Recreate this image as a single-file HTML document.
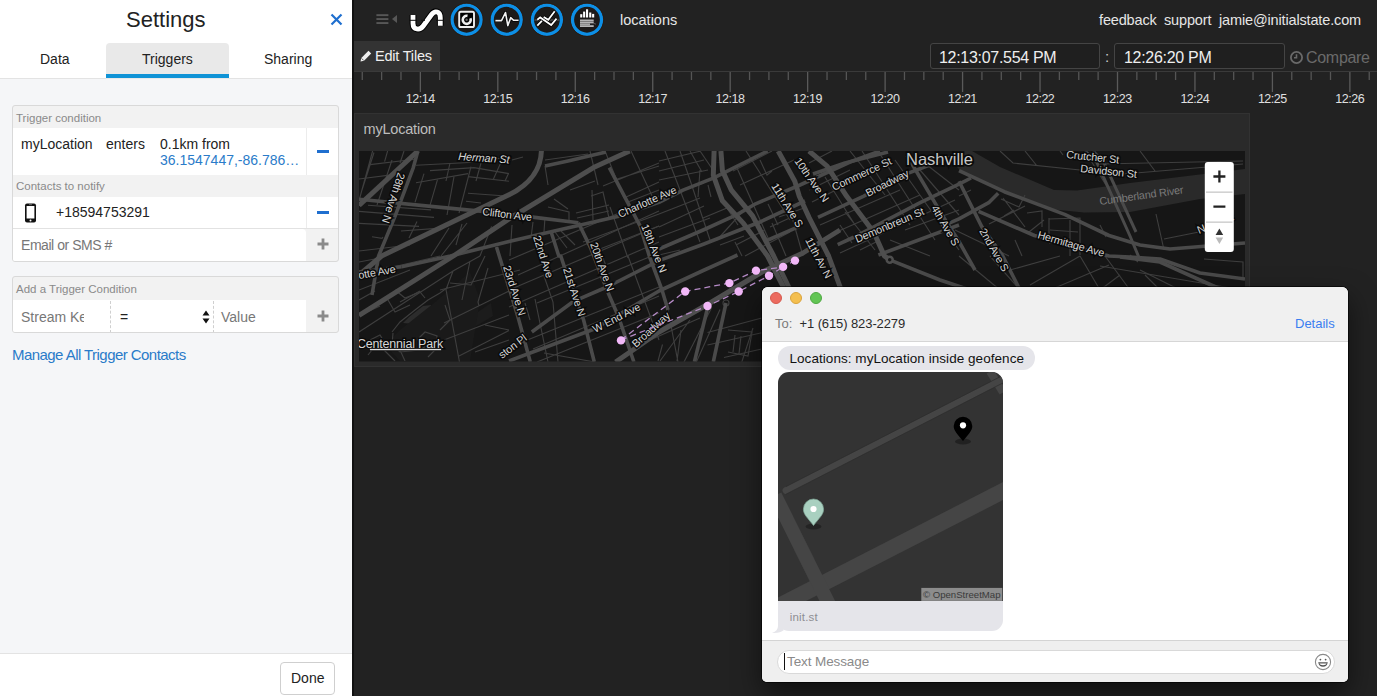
<!DOCTYPE html>
<html><head><meta charset="utf-8">
<style>
*{margin:0;padding:0;box-sizing:border-box}
html,body{width:1377px;height:696px;overflow:hidden;background:#222;font-family:"Liberation Sans",sans-serif}
.a{position:absolute;white-space:nowrap}
#left{position:absolute;left:0;top:0;width:352px;height:696px;background:#f5f6f8}
#lhead{position:absolute;left:0;top:0;width:352px;height:79px;background:#fff;border-bottom:1px solid #e3e3e3}
#lfoot{position:absolute;left:0;top:653px;width:352px;height:43px;background:#fff;border-top:1px solid #e3e3e3}
.box{position:absolute;left:12px;width:327px;border:1px solid #d9d9d9;border-radius:3px;background:#f2f2f2;overflow:hidden}
.hd{position:absolute;left:3px;font-size:11.5px;color:#8a8a8a}
.row{position:absolute;left:0;background:#fff}
.t14{font-size:14px;color:#222}
.tl{top:92px;width:50px;text-align:center;font-size:12.5px;color:#e0e0e0;letter-spacing:-0.5px}
#dark{position:absolute;left:352px;top:0;width:2px;height:696px;background:#111}
</style></head><body>
<div id="left">
  <div id="lhead">
    <div class="a" style="left:126px;top:6.5px;font-size:22px;color:#222">Settings</div>
    <svg class="a" style="left:330px;top:13px" width="13" height="13" viewBox="0 0 13 13"><path d="M1.5 1.5L11.5 11.5M11.5 1.5L1.5 11.5" stroke="#1f6fcf" stroke-width="2.2"/></svg>
    <div class="a" style="left:106px;top:43px;width:123px;height:36px;background:#e9e9e9;border-radius:4px 4px 0 0"></div>
    <div class="a" style="left:106px;top:74px;width:123px;height:4px;background:#0f93d6"></div>
    <div class="a t14" style="left:40px;top:51px">Data</div>
    <div class="a t14" style="left:142px;top:51px">Triggers</div>
    <div class="a t14" style="left:264px;top:51px">Sharing</div>
  </div>
  <div class="box" style="top:105px;height:157px">
    <div class="hd" style="top:6px">Trigger condition</div>
    <div class="row" style="top:22px;width:325px;height:47px"></div>
    <div class="a t14" style="left:8px;top:30px">myLocation</div>
    <div class="a t14" style="left:93px;top:30px">enters</div>
    <div class="a t14" style="left:147px;top:30px">0.1km from</div>
    <div class="a t14" style="left:147px;top:46px;color:#2a7bc9">36.1547447,-86.786…</div>
    <div class="a" style="left:293px;top:22px;width:1px;height:47px;background:#ececec"></div>
    <div class="a" style="left:304px;top:44px;width:12px;height:2.5px;background:#1f6fcf"></div>
    <div class="hd" style="top:74px">Contacts to notify</div>
    <div class="row" style="top:91px;width:325px;height:31px"></div>
    <div class="a" style="left:293px;top:91px;width:1px;height:31px;background:#ececec"></div>
    <div class="a t14" style="left:43px;top:98px">+18594753291</div>
    <div class="a" style="left:304px;top:105px;width:12px;height:2.5px;background:#1f6fcf"></div>
    <div class="a" style="left:0;top:121.5px;width:325px;height:1.5px;background:#e2e2e2"></div>
    <div class="row" style="top:123px;width:293px;height:33px;border-radius:0 4px 0 0"></div>
    <div class="a t14" style="left:8px;top:131px;color:#777;letter-spacing:-0.45px">Email or SMS #</div>
    <svg class="a" style="left:11px;top:97px" width="13" height="20" viewBox="0 0 13 20"><rect x="1" y="0.5" width="11" height="19" rx="2" fill="#111"/><rect x="2.6" y="3" width="7.8" height="12.5" fill="#fff"/><circle cx="6.5" cy="17.5" r="1" fill="#fff"/><rect x="5" y="1.3" width="3" height="0.8" fill="#777"/></svg>
    <svg class="a" style="left:304px;top:132px" width="12" height="12" viewBox="0 0 12 12"><path d="M6 0.5V11.5M0.5 6H11.5" stroke="#8a8a8a" stroke-width="2.8"/></svg>
  </div>
  <div class="box" style="top:276px;height:57px">
    <div class="hd" style="top:6px">Add a Trigger Condition</div>
    <div class="row" style="top:23px;width:293px;height:33px"></div>
    <div class="a" style="left:0;top:23px;width:71px;height:30px;overflow:hidden"><div class="a t14" style="left:8px;top:9px;color:#777">Stream Keys</div></div>
    <div class="a t14" style="left:107px;top:32px">=</div>
    <div class="a" style="left:97px;top:24px;width:0;height:32px;border-left:1px dashed #cfcfcf"></div>
    <div class="a" style="left:200px;top:24px;width:0;height:32px;border-left:1px dashed #cfcfcf"></div>
    <svg class="a" style="left:189px;top:33px" width="8" height="14" viewBox="0 0 8 14"><path d="M4 0.5L7.5 5.5H0.5Z M4 13.5L7.5 8.5H0.5Z" fill="#111"/></svg>
    <div class="a t14" style="left:208px;top:32px;color:#777">Value</div>
    <svg class="a" style="left:304px;top:33px" width="12" height="12" viewBox="0 0 12 12"><path d="M6 0.5V11.5M0.5 6H11.5" stroke="#8a8a8a" stroke-width="2.8"/></svg>
  </div>
  <div class="a" style="left:12px;top:346px;font-size:15px;letter-spacing:-0.55px;color:#2a7bc9">Manage All Trigger Contacts</div>
  <div id="lfoot">
    <div class="a" style="left:280px;top:8px;width:55px;height:33px;border:1px solid #cfcfcf;border-radius:4px;background:#fff"></div>
    <div class="a t14" style="left:291px;top:16px">Done</div>
  </div>
</div>

<div class="a" style="left:354px;top:0;width:1023px;height:696px;background:#222"></div>
<!-- top bar -->
<svg class="a" style="left:370px;top:0" width="250" height="40" viewBox="370 0 250 40">
  <rect x="376.4" y="14.2" width="12" height="1.9" fill="#575757"/>
  <rect x="376.4" y="18.1" width="12" height="1.9" fill="#575757"/>
  <rect x="376.4" y="22.1" width="12" height="1.9" fill="#575757"/>
  <path d="M392 19L397 15V23Z" fill="#575757"/>
  <path d="M413 15V23.5C413 30.2 420 30.5 423.2 26L431.6 14.5C435 10 440.3 11.3 440.3 17.8V25.8" fill="none" stroke="#000" stroke-width="6.8"/>
  <path d="M413 15V23.5C413 30.2 420 30.5 423.2 26L431.6 14.5C435 10 440.3 11.3 440.3 17.8V25.8" fill="none" stroke="#fff" stroke-width="4.8"/>
  <rect x="409" y="19.8" width="8" height="1" fill="#111"/><rect x="421" y="19.8" width="4" height="1" fill="#111"/><rect x="436" y="19.8" width="8" height="1" fill="#111"/>
  <g fill="#1c1a19" stroke="#0d8fe6" stroke-width="3.4">
    <circle cx="466.6" cy="19.75" r="14.6"/>
    <circle cx="506.7" cy="19.75" r="14.6"/>
    <circle cx="546.9" cy="19.75" r="14.6"/>
    <circle cx="587" cy="19.75" r="14.6"/>
  </g>
  <g fill="none" stroke="#2a180c" stroke-width="0.8">
    <circle cx="466.6" cy="19.75" r="16.6"/><circle cx="506.7" cy="19.75" r="16.6"/><circle cx="546.9" cy="19.75" r="16.6"/><circle cx="587" cy="19.75" r="16.6"/>
  </g>
  <rect x="459.2" y="11.8" width="14.8" height="15.2" rx="1.6" fill="#000" stroke="#eee" stroke-width="1.9"/>
  <path d="M470.4 18.2A4 4 0 1 1 467.5 15.9" fill="none" stroke="#eee" stroke-width="2.6"/>
  <circle cx="466.6" cy="19.8" r="1.2" fill="#666"/>
  <path d="M495.4 20.6H501.5L505.5 12.5L507.8 25.6L510.7 17.7L513.7 20.3H518.6" fill="none" stroke="#000" stroke-width="3" stroke-linejoin="round"/>
  <path d="M495.4 20.6H501.5L505.5 12.5L507.8 25.6L510.7 17.7L513.7 20.3H518.6" fill="none" stroke="#f2f2f2" stroke-width="1.6" stroke-linejoin="round"/>
  <rect x="534.4" y="19.6" width="25" height="0.8" fill="#777"/>
  <g fill="none" stroke="#000" stroke-width="3.2">
    <path d="M537.3 25.6L541.9 20.9"/><path d="M537.3 19.8L540.2 17.4L551.2 25L556.5 18.6"/><path d="M543.7 16.9L548.3 19.8L554.7 11.3"/>
  </g>
  <g fill="none" stroke="#fff" stroke-width="1.8">
    <path d="M537.3 25.6L541.9 20.9"/><path d="M537.3 19.8L540.2 17.4L551.2 25L556.5 18.6"/><path d="M543.7 16.9L548.3 19.8L554.7 11.3"/>
  </g>
  <g fill="#fff">
    <rect x="580.2" y="14.2" width="2.1" height="3.3"/><rect x="583.1" y="11.6" width="2.1" height="5.9"/><rect x="586" y="9.3" width="2.1" height="8.2"/><rect x="589.2" y="12.5" width="2.1" height="5"/><rect x="592.1" y="13.9" width="2.1" height="3.6"/>
  </g>
  <g fill="#b5b5b5">
    <rect x="580" y="19.5" width="13.7" height="1.6"/><rect x="580" y="21.4" width="13.7" height="1.6"/><rect x="580" y="23.3" width="15.4" height="1.6"/><rect x="580" y="25.2" width="13.7" height="1.8"/>
  </g>
  <rect x="590" y="23.6" width="5.4" height="1.2" fill="#000"/>
</svg>
<div class="a" style="left:620px;top:12px;font-size:14.5px;color:#e6e6e6;letter-spacing:0px">locations</div>
<div class="a" style="left:1099px;top:12px;font-size:14.5px;color:#e6e6e6;letter-spacing:-0.15px">feedback</div>
<div class="a" style="left:1164px;top:12px;font-size:14.5px;color:#e6e6e6;letter-spacing:-0.15px">support</div>
<div class="a" style="left:1219px;top:12px;font-size:14.5px;color:#e6e6e6;letter-spacing:-0.15px">jamie@initialstate.com</div>
<!-- edit tiles -->
<div class="a" style="left:354px;top:41px;width:86px;height:30px;background:#333"></div>
<svg class="a" style="left:359px;top:49px" width="14" height="14" viewBox="0 0 14 14"><path d="M1.5 12.5L2.3 9L9.5 1.8L12.2 4.5L5 11.7Z" fill="#eee"/><path d="M2.6 9.4L4.6 11.4" stroke="#333" stroke-width="0.8"/></svg>
<div class="a" style="left:375px;top:48px;font-size:14.5px;color:#f0f0f0;letter-spacing:-0.2px">Edit Tiles</div>
<!-- time inputs -->
<div class="a" style="left:930px;top:43px;width:170px;height:26px;border:1px solid #444;border-radius:3px;background:#1f1f1f"></div>
<div class="a" style="left:939px;top:48.5px;font-size:16px;color:#eee;letter-spacing:-0.3px">12:13:07.554 PM</div>
<div class="a" style="left:1105px;top:48px;font-size:15px;color:#ccc">:</div>
<div class="a" style="left:1114px;top:43px;width:171px;height:26px;border:1px solid #444;border-radius:3px;background:#1f1f1f"></div>
<div class="a" style="left:1124px;top:48.5px;font-size:16px;color:#eee;letter-spacing:-0.3px">12:26:20 PM</div>
<svg class="a" style="left:1289px;top:50px" width="15" height="15" viewBox="0 0 15 15"><circle cx="7.5" cy="7.5" r="5.6" fill="none" stroke="#6a6a6a" stroke-width="1.8"/><path d="M7.5 4.3V7.8H5" fill="none" stroke="#6a6a6a" stroke-width="1.6"/></svg>
<div class="a" style="left:1306px;top:48.5px;font-size:16px;color:#6a6a6a;letter-spacing:-0.3px">Compare</div>
<!-- timeline -->
<svg class="a" style="left:0;top:0" width="1377" height="100" viewBox="0 0 1377 100"><rect x="354" y="71" width="1023" height="1" fill="#3a3a3a"/><rect x="361.61" y="72" width="1.3" height="8" fill="#555"/><rect x="380.97" y="72" width="1.3" height="8" fill="#555"/><rect x="400.33" y="72" width="1.3" height="8" fill="#555"/><rect x="419.70" y="72" width="1.3" height="20" fill="#5a5a5a"/><rect x="439.06" y="72" width="1.3" height="8" fill="#555"/><rect x="458.43" y="72" width="1.3" height="8" fill="#555"/><rect x="477.79" y="72" width="1.3" height="8" fill="#555"/><rect x="497.16" y="72" width="1.3" height="20" fill="#5a5a5a"/><rect x="516.52" y="72" width="1.3" height="8" fill="#555"/><rect x="535.89" y="72" width="1.3" height="8" fill="#555"/><rect x="555.25" y="72" width="1.3" height="8" fill="#555"/><rect x="574.62" y="72" width="1.3" height="20" fill="#5a5a5a"/><rect x="593.99" y="72" width="1.3" height="8" fill="#555"/><rect x="613.35" y="72" width="1.3" height="8" fill="#555"/><rect x="632.71" y="72" width="1.3" height="8" fill="#555"/><rect x="652.08" y="72" width="1.3" height="20" fill="#5a5a5a"/><rect x="671.44" y="72" width="1.3" height="8" fill="#555"/><rect x="690.81" y="72" width="1.3" height="8" fill="#555"/><rect x="710.17" y="72" width="1.3" height="8" fill="#555"/><rect x="729.54" y="72" width="1.3" height="20" fill="#5a5a5a"/><rect x="748.90" y="72" width="1.3" height="8" fill="#555"/><rect x="768.27" y="72" width="1.3" height="8" fill="#555"/><rect x="787.63" y="72" width="1.3" height="8" fill="#555"/><rect x="807.00" y="72" width="1.3" height="20" fill="#5a5a5a"/><rect x="826.37" y="72" width="1.3" height="8" fill="#555"/><rect x="845.73" y="72" width="1.3" height="8" fill="#555"/><rect x="865.10" y="72" width="1.3" height="8" fill="#555"/><rect x="884.46" y="72" width="1.3" height="20" fill="#5a5a5a"/><rect x="903.82" y="72" width="1.3" height="8" fill="#555"/><rect x="923.19" y="72" width="1.3" height="8" fill="#555"/><rect x="942.55" y="72" width="1.3" height="8" fill="#555"/><rect x="961.92" y="72" width="1.3" height="20" fill="#5a5a5a"/><rect x="981.28" y="72" width="1.3" height="8" fill="#555"/><rect x="1000.65" y="72" width="1.3" height="8" fill="#555"/><rect x="1020.01" y="72" width="1.3" height="8" fill="#555"/><rect x="1039.38" y="72" width="1.3" height="20" fill="#5a5a5a"/><rect x="1058.74" y="72" width="1.3" height="8" fill="#555"/><rect x="1078.11" y="72" width="1.3" height="8" fill="#555"/><rect x="1097.47" y="72" width="1.3" height="8" fill="#555"/><rect x="1116.84" y="72" width="1.3" height="20" fill="#5a5a5a"/><rect x="1136.20" y="72" width="1.3" height="8" fill="#555"/><rect x="1155.57" y="72" width="1.3" height="8" fill="#555"/><rect x="1174.93" y="72" width="1.3" height="8" fill="#555"/><rect x="1194.30" y="72" width="1.3" height="20" fill="#5a5a5a"/><rect x="1213.66" y="72" width="1.3" height="8" fill="#555"/><rect x="1233.03" y="72" width="1.3" height="8" fill="#555"/><rect x="1252.39" y="72" width="1.3" height="8" fill="#555"/><rect x="1271.76" y="72" width="1.3" height="20" fill="#5a5a5a"/><rect x="1291.12" y="72" width="1.3" height="8" fill="#555"/><rect x="1310.49" y="72" width="1.3" height="8" fill="#555"/><rect x="1329.86" y="72" width="1.3" height="8" fill="#555"/><rect x="1349.22" y="72" width="1.3" height="20" fill="#5a5a5a"/><rect x="1368.58" y="72" width="1.3" height="8" fill="#555"/></svg>
<div class="a tl" style="left:395.2px">12:14</div>
<div class="a tl" style="left:472.7px">12:15</div>
<div class="a tl" style="left:550.1px">12:16</div>
<div class="a tl" style="left:627.6px">12:17</div>
<div class="a tl" style="left:705.0px">12:18</div>
<div class="a tl" style="left:782.5px">12:19</div>
<div class="a tl" style="left:860.0px">12:20</div>
<div class="a tl" style="left:937.4px">12:21</div>
<div class="a tl" style="left:1014.9px">12:22</div>
<div class="a tl" style="left:1092.3px">12:23</div>
<div class="a tl" style="left:1169.8px">12:24</div>
<div class="a tl" style="left:1247.3px">12:25</div>
<div class="a tl" style="left:1324.7px">12:26</div>

<!-- tile -->
<div class="a" style="left:354px;top:113px;width:896px;height:254px;background:#2a2a2a;border:1px solid #323232"></div>
<div class="a" style="left:363.5px;top:121px;font-size:14.5px;color:#bdbdbd;letter-spacing:-0.2px">myLocation</div>
<svg class="a" style="left:0;top:0" width="1377" height="696" viewBox="0 0 1377 696">
<defs><clipPath id="mc"><rect x="359" y="151" width="886" height="210.5"/></clipPath></defs>
<g clip-path="url(#mc)">
<rect x="359" y="151" width="886" height="211" fill="#161616"/>
<style>
.H{fill:none;stroke:#4e4e4e;stroke-width:5;stroke-linejoin:round}
.M{fill:none;stroke:#4a4a4a;stroke-width:3.6;stroke-linejoin:round}
.m{fill:none;stroke:#3e3e3e;stroke-width:1.15}
.lb{font-family:"Liberation Sans",sans-serif;font-size:10.8px;fill:#d6d6d6;stroke:#0a0a0a;stroke-width:3px;paint-order:stroke;letter-spacing:-0.15px}
</style>
<!-- river -->
<path d="M955 151 L972 151 L1000 167 L1054 190 L1077 190.5 L1130 183 L1245 169 V194 L1200 199 L1130 212 L1084 212.5 L1054 209.5 L999 189 L960 170 L950 160 Z" fill="#2a2a2a"/>
<!-- park -->
<path d="M403 323 L409 317 L423 306 L431 305 L434 328 L432 341 L426 328 L420 324.5 Z" fill="#2c2c2c"/>
<path d="M453 329 L491 303 L493 316 L466 332 Z" fill="#1c1c1c"/>
<path d="M434 303 L470 272 L480 300 L470 361 L400 361 L385 345 L400 330 Z" fill="#1a1a1a"/>
<!-- minor -->
<g class="m">
<path d="M668 310L678 362M662.5 344.5L658 361M681 330L677 361M728 330L752 332L748 356L728 352M735 335L733 352M741 336L739 354M726 303m-3 0a3 3 0 1 0 6 0a3 3 0 1 0 -6 0"/>
<path d="M682.5 365L711.7 307.5M695 365L720 309.6M707.5 345L761.7 332.7M707.5 332.5L761.7 318M724 357.5L761.7 349M740.8 365L753 328M660 361L690 320M650 340L700 318"/>
<path d="M392 332L400 322L415 310L428 300L440 293L448 287M393 333L392 345L400 352L420 350L432 342M417 340L425 332L437 336L435 350L428 357M388 300L395 312L410 305M370 340L380 335L388 348M440 330L450 320L445 305M405 361L400 350M395 290L405 298L420 292L425 298"/>
<path d="M370 164.6L415 159.3M416 165.3L474 162.3L509 157M359 179L401 173.6M416 182.7L468 173.6M430 170.6L474 167.6L509 173.6M468 176.6L509 181.2M468 193.3L509 196.3M466 201.3L481 203M359 211.4L434 217.4M359 223.4L419 226.4M368 205.3L431 209.9M401 231L437 228.4M372 236.8L382 238.4L383 237"/>
<path d="M372.6 151L359 200.8M374 152.5L362 190M387.6 151L384.6 161.6M404 151L400 163M392 160L377 205M424 173.6L415 202.3M437.5 179.7L430 205.3M454 176.6L447 215M471 166.6L459 213M481 163L476 181M450 163L446 181M502 160L493 180M508.5 173.6L505 181M491.6 226.4L480 256M467 223L441 256M417 221.6L409 238M431 256L449 228M456 245L462 224"/>
<path d="M359 332L453 271L480 256M444 323L509 291M444 340L509 315M458 356.5L509 330.6M453 271L446 289.5L459.5 362M485 256L471 285L450 283M488 268L478 302L479 306M359 300L375 291M400 302L420 291M379 345L395 361M368 355L380 340M485 325L509 330M462 300L470 261M475 352L509 340"/>
<path d="M512 160L523 157M545 160L588 154M545 166L548 185M590 151L598 185M605 151L624 198M631 151L654 200M570 190L595 181M591 196L603 192L609 218M592 190L593 220M576 213L609 205M577 218L609 211M603 186L659 163M614 180L659 166M624 198L659 182M628 202L659 190M583 242L659 214M600 249L659 226M610 207L628 258M545 217L544 232M533 222L531 238M512 225L510 256M554 199L568 209M548 207L569 212L569 220M555 232L567 248M561 231L575 245"/>
<path d="M509 290L659 226M509 260L659 196M518 275L659 211M509 307L659 242M537 303L659 253M515 345L659 287M533 349L659 296M537 362L659 313M544 353L595 362M544 276L553 302L558 362M535 299L548 362M525 303L530 320M628 256L659 340M602 256L607 268"/>
<path d="M659 161L701 151M659 171L704 160M659 180L708 170M662 198L704 183M659 227L704 206M659 237L710 218M659 214L700 198M665 151L700 242M680 151L690 180L710 240M690 151L702 172M700 151L713 170M700 170L698 197M708 185L711 197M733 171L772 151M740 185L794 160M760 160L767 175L772 171M746 151L790 220M737 168L769 240M717 240L744 210M720 245L744 236M703 218L727 208L738 225M736 245L765 230M745 256L790 232M770 227L794 216M779 217L804 208M768 204L778 225M790 210L803 256M772 223L786 256M659 255L680 250M735 242L742 256"/>
<path d="M809 163L832 151M809 190L850 170M812 202L870 173M820 225L900 190M832 234L920 195M840 253L955 200M845 212L875 250M825 177L855 225M850 151L885 195M862 151L910 225M878 151L935 240M895 160L959 250M920 170L959 215M927 165L959 190M820 241L830 256M860 250L880 240M890 240L930 256M905 230L959 210M840 225L852 243"/>
<path d="M959 196L971 190M989 224L1025 206M1003 198L1025 227M1004 216L1014 210M1001 199L1019 207L1025 195M1027 213L1042 211L1042 227M1029 232L1044 220M1049 218L1049 240M1049 219L1080 218L1080 255M1050 230L1078 232M1049 243L1080 244M1070 220L1070 256M1000 151L1013 163L1080 170M1025 151L1037 166M1060 151L1063 155M1085 151L1109 190M1015 240L1022 256M982 234L1000 256M955 230L1009 256"/>
<path d="M1100 164L1243 161M1140 151L1155 171M1100 176L1243 164M1156 214L1164 250M1164 239L1204 231M1204 259L1243 262V279M1100 225L1106 237M1130 255L1138 262M1100 266L1243 290M1145 275L1160 290M1100 290L1120 275"/>
<path d="M959 256L1000 290M990 256L1020 290M1010 270L1060 256M1030 285L1080 256M1050 290L1109 265M1080 256L1100 290M1105 256L1130 290M1140 270L1180 290M1200 280L1245 300M1160 300L1245 320M1100 320L1140 361M1150 310L1200 361M1210 300L1245 340"/>
<path d="M359 251L410 245M359 262L380 258M380 270L440 256M359 290L410 270M365 313L380 306M440 290L520 270"/>
</g>
<!-- medium roads -->
<g class="M">
<path d="M359 199.3L443.5 207.6L482.7 211.4L534.7 217.4L578.4 222.7"/>
<path d="M417.9 151L413.3 167.6L395.2 215.9L378.6 256L372 295"/>
<path d="M401.6 266.7L450.4 256L509 241.5L554.3 231L617.6 216.6L659 202.3L683 190.2L713.3 178.2L767.6 151"/>
<path d="M359 272L401.6 266.7"/>
<path d="M578.4 222.7L590.5 247.6L608 292.5L618.6 317L633.9 362"/>
<path d="M609.3 167.6L640.3 226.4L649.3 256L662 290L668 310"/>
<path d="M709 302L694.4 362"/>
<path d="M726 303L713.3 362"/>
<path d="M551.3 232.5L558.8 256L560.8 256L565.3 269.7L583.6 320L594.3 362"/>
<path d="M496.5 247L518 317L530.3 362"/>
<path d="M545 166L568 161L606 152"/>
<path d="M531.8 332L573 301.7L608 286.5L659 260.6L704 244L760 222L805 201"/>
<path d="M509 361L594.3 329L659 291L704.3 270L737.5 255"/>
<path d="M659 249L704.3 229.5L737.5 214.4L755.6 203.8L800 185L850 162L880 151"/>
<path d="M764.6 241.5L799.3 226.4"/>
<path d="M813 174L845 163L888 152"/>
<path d="M818 217.4L863.3 196.3L907.1 173.6L959 154"/>
<path d="M837.7 244.6L854.3 237L920.7 202.3L959 184.2L971 178"/>
<path d="M907 155.5L941.8 214.4L959 241.5L975 270"/>
<path d="M941.8 226.4L959 218.9L989.2 202.3L998.2 193.3"/>
<path d="M878.4 255L959 225"/>
<path d="M959 181.2L981.6 226.4L1002.8 256L1020 290"/>
<path d="M959 170.6L1004.3 191.7L1064.6 214.4L1109 235.5L1140 245L1170 249L1245 243"/>
<path d="M978.6 211.4L1034.4 235.5L1109 256L1130 257L1160 259L1200 273L1245 279"/>
<path d="M1120 257L1160 262L1200 280L1245 300"/>
<path d="M889.7 259.8L940 280L1000 300"/>
<path d="M1085 151L1097 162.6L1130 236L1140 260" style="stroke-width:3"/>
<path d="M1093 151L1104 162.6L1136 232" style="stroke-width:3"/>
</g>
<!-- highways -->
<g class="H">
<path d="M359 205.3L417.9 151"/>
<path d="M541.4 151C541 166 533 183 509 194.8L381.6 256L359 275"/>
<path d="M359 315.4L453.4 256L509 218.9L593.5 167.6L629.7 151"/>
<path d="M714.1 151L713.3 175.1L722.4 200.8L743.5 223.4L767.6 256L790 300L810 361"/>
<path d="M720.9 151L722.4 170.6L731.4 190.2L752.6 215.9L773.7 256L795 300"/>
<path d="M778.2 151L794.8 181.2L799.3 196.3L809 217.4L828.6 256L845 300"/>
<path d="M809 151L827.1 166.1L846.7 196.3L873.9 232.5L884.4 256L889.7 259.8"/>
<path d="M615.6 362L659 332L710 303L762 272L803 253L840 230"/>
</g>
<circle cx="889.7" cy="259.8" r="3" fill="#161616" stroke="#4e4e4e" stroke-width="2.5"/>
<!-- labels -->
<text class="lb" transform="translate(458 160) rotate(4)" font-style="italic" style="font-size:11px">Herman St</text>
<text class="lb" transform="translate(398 172) rotate(108)" style="font-size:11px">28th Ave N</text>
<text class="lb" transform="translate(482 215) rotate(7)">Clifton Ave</text>
<text class="lb" transform="translate(620 218) rotate(-24)">Charlotte Ave</text>
<text class="lb" transform="translate(359 279) rotate(-10)">otte Ave</text>
<text class="lb" x="906" y="165" style="font-size:16.5px;letter-spacing:0px;fill:#c8c8c8;stroke:#0a0a0a;stroke-width:3.5px">Nashville</text>
<text class="lb" transform="translate(834 191) rotate(-25)">Commerce St</text>
<text class="lb" transform="translate(868 197) rotate(-27)">Broadway</text>
<text class="lb" transform="translate(857 243) rotate(-23)">Demonbreun St</text>
<text class="lb" transform="translate(1037 238) rotate(16)">Hermitage Ave</text>
<text class="lb" transform="translate(1066 158) rotate(6)">Crutcher St</text>
<text class="lb" transform="translate(1080 172) rotate(6)">Davidson St</text>
<text class="lb" transform="translate(1100 205) rotate(-8)" style="fill:#7a7a7a;stroke:none">Cumberland River</text>
<text class="lb" transform="translate(1199 234) rotate(-22)" style="font-size:11px">N 1st St</text>
<text class="lb" transform="translate(595 333) rotate(-27)">W End Ave</text>
<text class="lb" transform="translate(636 348) rotate(-42)">Broadway</text>
<text class="lb" transform="translate(502 359) rotate(-37)">ston Pl</text>
<text class="lb" x="357" y="348" style="font-size:12.5px;letter-spacing:-0.2px">Centennial Park</text>
<rect x="369.5" y="348.5" width="72" height="2.2" fill="#e0e0e0" stroke="#111" stroke-width="0.8"/>
<text class="lb" transform="translate(503 267) rotate(72)">23rd Ave N</text>
<text class="lb" transform="translate(533 237) rotate(72)">22nd Ave</text>
<text class="lb" transform="translate(563 269) rotate(72)">21st Ave N</text>
<text class="lb" transform="translate(590 244) rotate(70)">20th Ave N</text>
<text class="lb" transform="translate(641 226) rotate(68)">18th Ave N</text>
<text class="lb" transform="translate(771 186) rotate(58)">11th Ave S</text>
<text class="lb" transform="translate(805 240) rotate(62)">11th Av N</text>
<text class="lb" transform="translate(794 161) rotate(55)">10th Ave N</text>
<text class="lb" transform="translate(931 208) rotate(60)">4th Ave S</text>
<text class="lb" transform="translate(979 231) rotate(60)">2nd Ave S</text>
<!-- path dots -->
<g fill="none" stroke="#b58ac6" stroke-width="1.3" stroke-dasharray="6 4">
<path d="M621 340 L685 291.5 L729.4 283 L756 270.6 L783 267 L795 260.6"/>
<path d="M621 340 L707.5 306 L738.7 291.5 L769 275.8 L783 267"/>
</g>
<g fill="#f2b8f8">
<circle cx="621" cy="340.4" r="4.2"/><circle cx="685.2" cy="291.5" r="4.2"/><circle cx="707.5" cy="306" r="4.2"/><circle cx="729.4" cy="283.1" r="4.2"/><circle cx="738.7" cy="291.5" r="4.2"/><circle cx="756" cy="270.6" r="4.2"/><circle cx="769" cy="275.8" r="4.2"/><circle cx="783.1" cy="266.9" r="4.2"/><circle cx="795" cy="260.6" r="4.2"/>
</g>
<!-- zoom control -->
<rect x="1204.8" y="162" width="29" height="90" rx="3" fill="#fff"/>
<rect x="1206" y="191.5" width="26.5" height="1.3" fill="#c8c8c8"/>
<rect x="1206" y="221.5" width="26.5" height="1.3" fill="#c8c8c8"/>
<path d="M1219.4 170.5V182.5M1213.4 176.5H1225.4" stroke="#222" stroke-width="2.3"/>
<path d="M1213.4 206.7H1225.4" stroke="#222" stroke-width="2.3"/>
<path d="M1219.4 228.5L1223.2 235H1215.6Z" fill="#333"/>
<path d="M1219.4 244L1223.2 237.5H1215.6Z" fill="#bbb"/>

</g>
</svg>
<div id="dark"></div>
<div class="a" style="left:762px;top:286.5px;width:586px;height:395px;border-radius:6px 6px 5px 5px;background:#fff;box-shadow:0 0 0 1px rgba(0,0,0,0.6),0 12px 28px rgba(0,0,0,0.55);overflow:hidden">
  <div class="a" style="left:0;top:0;width:586px;height:55.5px;background:#f0f0f0;border-bottom:1px solid #d6d6d6"></div>
  <div class="a" style="left:8px;top:5px;width:12px;height:12px;border-radius:50%;background:#ec6b5f;border:0.5px solid #d55a4e"></div>
  <div class="a" style="left:28px;top:5px;width:12px;height:12px;border-radius:50%;background:#f4bf4f;border:0.5px solid #d9a33c"></div>
  <div class="a" style="left:48px;top:5px;width:12px;height:12px;border-radius:50%;background:#62c554;border:0.5px solid #4fa842"></div>
  <div class="a" style="left:13px;top:29px;font-size:13px;color:#7a7a7a">To:</div>
  <div class="a" style="left:37.5px;top:29px;font-size:13px;color:#2a2a2a;letter-spacing:-0.1px">+1 (615) 823-2279</div>
  <div class="a" style="left:533px;top:29px;font-size:13px;color:#3b7ef0">Details</div>
  <div class="a" style="left:16px;top:59.3px;width:257px;height:24px;border-radius:12px;background:#e5e5ea"></div>
  <div class="a" style="left:27.5px;top:64px;font-size:13.5px;color:#111;letter-spacing:0.05px">Locations: myLocation inside geofence</div>
  <div class="a" style="left:16px;top:85px;width:224.5px;height:259px;border-radius:11px;background:#e5e5ea;overflow:hidden">
    <svg class="a" style="left:0;top:0" width="225" height="229" viewBox="778 371.5 225 229">
      <rect x="778" y="371.5" width="225" height="229" fill="#333"/>
      <path d="M785.8 490L1010 375" stroke="#454545" stroke-width="6.5" stroke-linecap="round"/>
      <path d="M770 610L1010 487" stroke="#454545" stroke-width="16"/>
      <path d="M775 495L832 610" stroke="#454545" stroke-width="14"/>
      <path d="M990 371L1003 392" stroke="#454545" stroke-width="8"/>
      <path d="M785.8 490L1010 375" stroke="#2c2c2c" stroke-width="0.7" fill="none" transform="translate(0 3.8)"/><path d="M785.8 490L1010 375" stroke="#2c2c2c" stroke-width="0.7" fill="none" transform="translate(0 -3.8)"/>
      <ellipse cx="963" cy="441" rx="8" ry="3" fill="rgba(0,0,0,0.35)"/>
      <path d="M963 440.6C957 433 953.7 430 953.7 425.5A9.3 9.3 0 0 1 972.3 425.5C972.3 430 969 433 963 440.6Z" fill="#000"/>
      <circle cx="963" cy="424.8" r="3.1" fill="#fff"/>
      <ellipse cx="813.5" cy="526" rx="8" ry="3" fill="rgba(0,0,0,0.3)"/>
      <path d="M813.5 525C807.3 517 803.4 514 803.4 508.6A10.1 10.1 0 0 1 823.6 508.6C823.6 514 819.7 517 813.5 525Z" fill="#a9d0c0" stroke="#7fa898" stroke-width="0.7"/>
      <circle cx="813.5" cy="508.5" r="3.1" fill="#fff"/>
      <rect x="921.3" y="587.4" width="81" height="13" fill="#8c8c8c"/>
      <text x="923" y="597.5" font-family="Liberation Sans" font-size="9.6" fill="#3a3a3a">© OpenStreetMap</text>
    </svg>
    <div class="a" style="left:11.7px;top:239px;font-size:11.5px;color:#8e8e93;letter-spacing:0.2px">init.st</div>
  </div>
  <svg class="a" style="left:10px;top:333px" width="16" height="14" viewBox="0 0 16 14"><path d="M6 0V6Q6 11 0 13Q8 13.5 12 10Z" fill="#e5e5ea"/></svg>
  <div class="a" style="left:0;top:353.5px;width:586px;height:42px;background:#efefef;border-top:1px solid #d4d4d4"></div>
  <div class="a" style="left:14.6px;top:363.5px;width:558.5px;height:23.5px;border-radius:12px;background:#fff;border:1px solid #d9d9d9"></div>
  <div class="a" style="left:22px;top:366.5px;width:1px;height:17px;background:#111"></div>
  <div class="a" style="left:25px;top:367.5px;font-size:13.5px;color:#8a8a8a;letter-spacing:-0.1px">Text Message</div>
  <svg class="a" style="left:552px;top:366px" width="18" height="18" viewBox="0 0 18 18"><circle cx="9" cy="9" r="7.6" fill="none" stroke="#8a8a8a" stroke-width="1.1"/><circle cx="6.4" cy="6.6" r="0.9" fill="#555"/><circle cx="11.6" cy="6.6" r="0.9" fill="#555"/><path d="M4.2 9.3H13.8Q13 13.8 9 13.8Q5 13.8 4.2 9.3Z" fill="#555"/><path d="M5.3 10.4H12.7Q12 12.2 9 12.2Q6 12.2 5.3 10.4Z" fill="#fff"/></svg>
</div>


</body></html>
